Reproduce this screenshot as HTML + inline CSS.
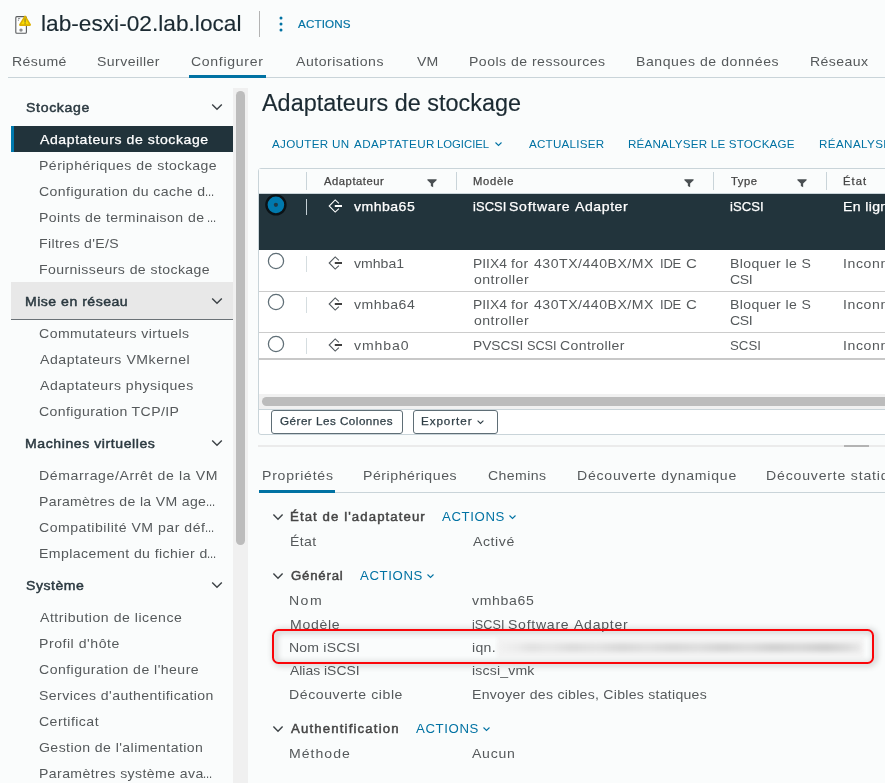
<!DOCTYPE html>
<html lang="fr"><head><meta charset="utf-8"><title>vSphere Client - lab-esxi-02.lab.local</title><style>
*{margin:0;padding:0;box-sizing:border-box}
html,body{width:885px;height:783px;overflow:hidden;background:#fafcfc;font-family:"Liberation Sans",sans-serif}
#r{position:relative;width:885px;height:783px;overflow:hidden}
.b{position:absolute}
.t{position:absolute;white-space:nowrap;line-height:1;transform-origin:0 0;display:block}
.m{-webkit-text-stroke:0.25px currentColor}
.h{-webkit-text-stroke:0.45px currentColor}
.l{-webkit-text-stroke:0.15px currentColor}
</style></head><body><div id="r">
<!-- host icon -->
<svg class="b" style="left:14px;top:14px" width="20" height="22" viewBox="0 0 20 22">
  <rect x="1.8" y="2.65" width="10.6" height="16.65" rx="1" fill="#fdfefe" stroke="#585b5d" stroke-width="1.1"/>
  <circle cx="7" cy="16.1" r="1.7" fill="#8a8c8d"/>
  <path d="M4 4.6 H6.2 M4.4 5.6 V6.8" stroke="#7d8082" stroke-width="0.9" fill="none"/>
  <path d="M11.05 2.7 L15.9 10.9 L6.2 10.9 Z" fill="#f9dc00" stroke="#dcb000" stroke-width="2.2" stroke-linejoin="round"/><path d="M11.05 3.6 L14.9 10.3 L7.2 10.3 Z" fill="#f9dc00"/>
  <rect x="10.35" y="4.4" width="1.45" height="4.2" fill="#a38d22"/>
  <rect x="10.35" y="9.2" width="1.45" height="1.1" fill="#a38d22"/>
</svg>
<div class="b" style="left:259px;top:11px;width:1px;height:26px;background:#b3b3b3"></div>
<svg class="b" style="left:278px;top:15px" width="6" height="18" viewBox="0 0 6 18"><circle cx="3" cy="3" r="1.5" fill="#0072a3"/><circle cx="3" cy="9" r="1.5" fill="#0072a3"/><circle cx="3" cy="15" r="1.5" fill="#0072a3"/></svg>
<!-- top tabs line -->
<div class="b" style="left:8px;top:77px;width:877px;height:1px;background:#c9d4d9"></div>
<div class="b" style="left:189px;top:75px;width:77px;height:3px;background:#0072a3"></div>
<!-- left nav -->
<div class="b" style="left:11px;top:126px;width:222px;height:25.5px;background:#21333b"></div>
<div class="b" style="left:11px;top:126px;width:3px;height:25.5px;background:#0079ad"></div>
<div class="b" style="left:11px;top:282px;width:222px;height:38px;background:#e8e8e8;border-bottom:1px solid #6b7277"></div>
<svg class="b" style="left:211px;top:103px" width="12" height="8" viewBox="0 0 12 8"><path d="M1.2 1.5 L6 6.2 L10.8 1.5" fill="none" stroke="#3d4347" stroke-width="1.45"/></svg>
<svg class="b" style="left:211px;top:297px" width="12" height="8" viewBox="0 0 12 8"><path d="M1.2 1.5 L6 6.2 L10.8 1.5" fill="none" stroke="#3d4347" stroke-width="1.45"/></svg>
<svg class="b" style="left:211px;top:439px" width="12" height="8" viewBox="0 0 12 8"><path d="M1.2 1.5 L6 6.2 L10.8 1.5" fill="none" stroke="#3d4347" stroke-width="1.45"/></svg>
<svg class="b" style="left:211px;top:581px" width="12" height="8" viewBox="0 0 12 8"><path d="M1.2 1.5 L6 6.2 L10.8 1.5" fill="none" stroke="#3d4347" stroke-width="1.45"/></svg>
<!-- nav scrollbar -->
<div class="b" style="left:233px;top:88px;width:15px;height:695px;background:#f0f0f0"></div>
<div class="b" style="left:236.2px;top:91px;width:8.9px;height:454px;background:#bcbcbc;border-radius:4.5px"></div>
<!-- datagrid -->
<div class="b" style="left:258px;top:168px;width:640px;height:267px;background:#ffffff;border:1px solid #c9d4d9;border-radius:3px"></div>
<div class="b" style="left:259px;top:169px;width:626px;height:24px;background:#fafcfc"></div>
<div class="b" style="left:259px;top:193px;width:626px;height:1px;background:#c9d4d9"></div>
<div class="b" style="left:306px;top:172px;width:1px;height:18px;background:#c9d4d9"></div>
<div class="b" style="left:456px;top:172px;width:1px;height:18px;background:#c9d4d9"></div>
<div class="b" style="left:713px;top:172px;width:1px;height:18px;background:#c9d4d9"></div>
<div class="b" style="left:826px;top:172px;width:1px;height:18px;background:#c9d4d9"></div>
<svg class="b" style="left:427px;top:178px" width="10" height="10" viewBox="0 0 10 10"><path d="M0.4 1.2 H9.6 V2.2 L6.15 5.6 V9.2 L3.85 7.9 V5.6 L0.4 2.2 Z" fill="#4a4f52"/></svg>
<svg class="b" style="left:684px;top:178px" width="10" height="10" viewBox="0 0 10 10"><path d="M0.4 1.2 H9.6 V2.2 L6.15 5.6 V9.2 L3.85 7.9 V5.6 L0.4 2.2 Z" fill="#4a4f52"/></svg>
<svg class="b" style="left:796.5px;top:178px" width="10" height="10" viewBox="0 0 10 10"><path d="M0.4 1.2 H9.6 V2.2 L6.15 5.6 V9.2 L3.85 7.9 V5.6 L0.4 2.2 Z" fill="#4a4f52"/></svg>
<!-- selected row -->
<div class="b" style="left:259px;top:194px;width:626px;height:56px;background:#22343c"></div>
<div class="b" style="left:306px;top:199px;width:1px;height:16px;background:#c4cfd5"></div>
<svg class="b" style="left:264px;top:193px" width="24" height="24" viewBox="0 0 24 24"><circle cx="11.9" cy="11.85" r="9.5" fill="#0079ad" stroke="#0b1216" stroke-width="2.4"/><circle cx="11.9" cy="11.85" r="2.1" fill="#1d3a47"/></svg>
<!-- other rows -->
<div class="b" style="left:259px;top:291px;width:626px;height:1px;background:#cccccc"></div>
<div class="b" style="left:259px;top:332px;width:626px;height:1px;background:#cccccc"></div>
<div class="b" style="left:259px;top:358.2px;width:626px;height:1.6px;background:#c8c8c8"></div>
<div class="b" style="left:306px;top:256px;width:1px;height:16px;background:#d5dde0"></div>
<div class="b" style="left:306px;top:297px;width:1px;height:16px;background:#d5dde0"></div>
<div class="b" style="left:306px;top:338px;width:1px;height:16px;background:#d5dde0"></div>
<svg class="b" style="left:266px;top:251.4px" width="20" height="20" viewBox="0 0 20 20"><circle cx="10" cy="10" r="7.6" fill="#fff" stroke="#5f6e76" stroke-width="1.25"/></svg>
<svg class="b" style="left:266px;top:292.4px" width="20" height="20" viewBox="0 0 20 20"><circle cx="10" cy="10" r="7.6" fill="#fff" stroke="#5f6e76" stroke-width="1.25"/></svg>
<svg class="b" style="left:266px;top:333.5px" width="20" height="20" viewBox="0 0 20 20"><circle cx="10" cy="10" r="7.6" fill="#fff" stroke="#5f6e76" stroke-width="1.25"/></svg>
<!-- adapter icons -->
<svg class="b" style="left:328px;top:198.9px" width="16" height="14" viewBox="0 0 16 14"><path d="M10.9 4.3 L7.2 0.9 L1.2 7 L7.2 13.1 L10.9 9.7" fill="none" stroke="#ffffff" stroke-width="1.1"/><path d="M6.8 7 H14" stroke="#ffffff" stroke-width="2.0"/></svg>
<svg class="b" style="left:328px;top:255.8px" width="16" height="14" viewBox="0 0 16 14"><path d="M10.9 4.3 L7.2 0.9 L1.2 7 L7.2 13.1 L10.9 9.7" fill="none" stroke="#50575c" stroke-width="1.1"/><path d="M6.8 7 H14" stroke="#414141" stroke-width="2.0"/></svg>
<svg class="b" style="left:328px;top:296.8px" width="16" height="14" viewBox="0 0 16 14"><path d="M10.9 4.3 L7.2 0.9 L1.2 7 L7.2 13.1 L10.9 9.7" fill="none" stroke="#50575c" stroke-width="1.1"/><path d="M6.8 7 H14" stroke="#414141" stroke-width="2.0"/></svg>
<svg class="b" style="left:328px;top:337.8px" width="16" height="14" viewBox="0 0 16 14"><path d="M10.9 4.3 L7.2 0.9 L1.2 7 L7.2 13.1 L10.9 9.7" fill="none" stroke="#50575c" stroke-width="1.1"/><path d="M6.8 7 H14" stroke="#414141" stroke-width="2.0"/></svg>
<!-- h scrollbar -->
<div class="b" style="left:259px;top:394px;width:626px;height:15px;background:#f1f1f1"></div>
<div class="b" style="left:262px;top:397px;width:640px;height:9px;background:#bcbcbc;border-radius:4.5px"></div>
<div class="b" style="left:259px;top:409px;width:626px;height:1px;background:#c9d4d9"></div>
<!-- footer buttons -->
<div class="b" style="left:271px;top:410px;width:132px;height:24px;border:1px solid #5f6e76;border-radius:3px;background:#fff"></div>
<div class="b" style="left:413px;top:410px;width:85px;height:24px;border:1px solid #5f6e76;border-radius:3px;background:#fff"></div>
<svg class="b" style="left:475.5px;top:418.5px" width="9" height="6" viewBox="0 0 9 6"><path d="M1.6 1.6 L4.5 4.4 L7.4 1.6" fill="none" stroke="#2f3e46" stroke-width="1.1"/></svg>
<!-- add-adapter chevron -->
<svg class="b" style="left:494px;top:141px" width="9" height="6" viewBox="0 0 9 6"><path d="M1.5 1.5 L4.5 4.4 L7.5 1.5" fill="none" stroke="#0072a3" stroke-width="1.1"/></svg>
<!-- splitter -->
<div class="b" style="left:258px;top:445px;width:627px;height:1.5px;background:#ebebeb"></div>
<div class="b" style="left:844px;top:445px;width:25px;height:2px;background:#b3b3b3"></div>
<!-- detail tabs -->
<div class="b" style="left:259px;top:492px;width:626px;height:1px;background:#c9d4d9"></div>
<div class="b" style="left:259px;top:490px;width:76px;height:3px;background:#0072a3"></div>
<!-- section chevrons -->
<svg class="b" style="left:272px;top:512.5px" width="12" height="8" viewBox="0 0 12 8"><path d="M1.4 1.6 L6 6.2 L10.6 1.6" fill="none" stroke="#3d4347" stroke-width="1.45"/></svg>
<svg class="b" style="left:272px;top:571.5px" width="12" height="8" viewBox="0 0 12 8"><path d="M1.4 1.6 L6 6.2 L10.6 1.6" fill="none" stroke="#3d4347" stroke-width="1.45"/></svg>
<svg class="b" style="left:272px;top:724.5px" width="12" height="8" viewBox="0 0 12 8"><path d="M1.4 1.6 L6 6.2 L10.6 1.6" fill="none" stroke="#3d4347" stroke-width="1.45"/></svg>
<svg class="b" style="left:507.5px;top:514px" width="9" height="6" viewBox="0 0 9 6"><path d="M1.5 1.5 L4.5 4.4 L7.5 1.5" fill="none" stroke="#0072a3" stroke-width="1.1"/></svg>
<svg class="b" style="left:425.5px;top:573px" width="9" height="6" viewBox="0 0 9 6"><path d="M1.5 1.5 L4.5 4.4 L7.5 1.5" fill="none" stroke="#0072a3" stroke-width="1.1"/></svg>
<svg class="b" style="left:481.5px;top:726px" width="9" height="6" viewBox="0 0 9 6"><path d="M1.5 1.5 L4.5 4.4 L7.5 1.5" fill="none" stroke="#0072a3" stroke-width="1.1"/></svg>

<span class="t l" style="left:40.80px;top:13.00px;font-size:22.6px;color:#1b2a32;letter-spacing:0.01px;transform:scaleX(1.0030);">lab-esxi-02.lab.local</span>
<span class="t l" style="left:298.00px;top:19.00px;font-size:10.6px;color:#0072a3;letter-spacing:0.121px;transform:scaleX(1.1000);">ACTIONS</span>
<span class="t" style="left:12.00px;top:56.00px;font-size:12.8px;color:#55595b;letter-spacing:0.345px;transform:scaleX(1.1000);">Résumé</span>
<span class="t" style="left:97.00px;top:56.00px;font-size:12.8px;color:#55595b;letter-spacing:0.384px;transform:scaleX(1.1000);">Surveiller</span>
<span class="t" style="left:191.00px;top:56.00px;font-size:12.8px;color:#55595b;letter-spacing:0.616px;transform:scaleX(1.1000);">Configurer</span>
<span class="t" style="left:295.50px;top:56.00px;font-size:12.8px;color:#55595b;letter-spacing:0.462px;transform:scaleX(1.1000);">Autorisations</span>
<span class="t" style="left:416.60px;top:56.00px;font-size:12.8px;color:#55595b;transform:scaleX(1.1000);">VM</span>
<span class="t" style="left:469.00px;top:56.00px;font-size:12.8px;color:#55595b;letter-spacing:0.429px;transform:scaleX(1.1000);">Pools de ressources</span>
<span class="t" style="left:636.00px;top:56.00px;font-size:12.8px;color:#55595b;letter-spacing:0.508px;transform:scaleX(1.1000);">Banques de données</span>
<span class="t" style="left:809.50px;top:56.00px;font-size:12.8px;color:#55595b;letter-spacing:0.394px;transform:scaleX(1.1000);">Réseaux</span>
<span class="t h" style="left:26.00px;top:102.00px;font-size:12.8px;color:#2b3940;letter-spacing:0.61px;transform:scaleX(1.1000);">Stockage</span>
<span class="t m" style="left:40.00px;top:134.00px;font-size:12.8px;color:#ffffff;letter-spacing:0.512px;transform:scaleX(1.1000);">Adaptateurs de stockage</span>
<span class="t" style="left:39.00px;top:160.00px;font-size:12.8px;color:#55595b;letter-spacing:0.417px;transform:scaleX(1.1000);">Périphériques de stockage</span>
<span class="t" style="left:39.00px;top:186.00px;font-size:12.8px;color:#55595b;letter-spacing:0.379px;transform:scaleX(1.1000);">Configuration du cache d</span>
<span class="t" style="left:205.10px;top:186.00px;font-size:12.8px;color:#55595b;letter-spacing:-0.114px;transform:scaleX(0.8778);">...</span>
<span class="t" style="left:39.00px;top:212.00px;font-size:12.8px;color:#55595b;letter-spacing:0.399px;transform:scaleX(1.1000);">Points de terminaison de</span>
<span class="t" style="left:207.10px;top:212.00px;font-size:12.8px;color:#55595b;letter-spacing:-0.114px;transform:scaleX(0.8778);">...</span>
<span class="t" style="left:39.00px;top:238.00px;font-size:12.8px;color:#55595b;letter-spacing:0.326px;transform:scaleX(1.1000);">Filtres d&#x27;E/S</span>
<span class="t" style="left:39.00px;top:264.00px;font-size:12.8px;color:#55595b;letter-spacing:0.375px;transform:scaleX(1.1000);">Fournisseurs de stockage</span>
<span class="t h" style="left:25.00px;top:296.00px;font-size:12.8px;color:#2b3940;letter-spacing:0.448px;transform:scaleX(1.1000);">Mise en réseau</span>
<span class="t" style="left:39.00px;top:328.00px;font-size:12.8px;color:#55595b;letter-spacing:0.423px;transform:scaleX(1.1000);">Commutateurs virtuels</span>
<span class="t" style="left:40.00px;top:354.00px;font-size:12.8px;color:#55595b;letter-spacing:0.498px;transform:scaleX(1.1000);">Adaptateurs VMkernel</span>
<span class="t" style="left:40.00px;top:380.00px;font-size:12.8px;color:#55595b;letter-spacing:0.455px;transform:scaleX(1.1000);">Adaptateurs physiques</span>
<span class="t" style="left:39.00px;top:406.00px;font-size:12.8px;color:#55595b;letter-spacing:0.34px;transform:scaleX(1.1000);">Configuration TCP/IP</span>
<span class="t h" style="left:25.00px;top:438.00px;font-size:12.8px;color:#2b3940;letter-spacing:0.515px;transform:scaleX(1.1000);">Machines virtuelles</span>
<span class="t" style="left:39.00px;top:470.00px;font-size:12.8px;color:#55595b;letter-spacing:0.561px;transform:scaleX(1.1000);">Démarrage/Arrêt de la VM</span>
<span class="t" style="left:39.00px;top:496.00px;font-size:12.8px;color:#55595b;letter-spacing:0.302px;transform:scaleX(1.1000);">Paramètres de la VM age</span>
<span class="t" style="left:206.10px;top:496.00px;font-size:12.8px;color:#55595b;letter-spacing:-0.114px;transform:scaleX(0.8778);">...</span>
<span class="t" style="left:39.00px;top:522.00px;font-size:12.8px;color:#55595b;letter-spacing:0.466px;transform:scaleX(1.1000);">Compatibilité VM par déf</span>
<span class="t" style="left:205.10px;top:522.00px;font-size:12.8px;color:#55595b;letter-spacing:-0.114px;transform:scaleX(0.8778);">...</span>
<span class="t" style="left:39.00px;top:548.00px;font-size:12.8px;color:#55595b;letter-spacing:0.372px;transform:scaleX(1.1000);">Emplacement du fichier d</span>
<span class="t" style="left:207.10px;top:548.00px;font-size:12.8px;color:#55595b;letter-spacing:-0.114px;transform:scaleX(0.8778);">...</span>
<span class="t h" style="left:26.00px;top:580.00px;font-size:12.8px;color:#2b3940;letter-spacing:0.455px;transform:scaleX(1.1000);">Système</span>
<span class="t" style="left:40.00px;top:612.00px;font-size:12.8px;color:#55595b;letter-spacing:0.481px;transform:scaleX(1.1000);">Attribution de licence</span>
<span class="t" style="left:39.00px;top:638.00px;font-size:12.8px;color:#55595b;letter-spacing:0.485px;transform:scaleX(1.1000);">Profil d&#x27;hôte</span>
<span class="t" style="left:39.00px;top:664.00px;font-size:12.8px;color:#55595b;letter-spacing:0.419px;transform:scaleX(1.1000);">Configuration de l&#x27;heure</span>
<span class="t" style="left:39.00px;top:690.00px;font-size:12.8px;color:#55595b;letter-spacing:0.395px;transform:scaleX(1.1000);">Services d&#x27;authentification</span>
<span class="t" style="left:39.00px;top:716.00px;font-size:12.8px;color:#55595b;letter-spacing:0.404px;transform:scaleX(1.1000);">Certificat</span>
<span class="t" style="left:39.00px;top:742.00px;font-size:12.8px;color:#55595b;letter-spacing:0.386px;transform:scaleX(1.1000);">Gestion de l&#x27;alimentation</span>
<span class="t" style="left:39.00px;top:768.00px;font-size:12.8px;color:#55595b;letter-spacing:0.372px;transform:scaleX(1.1000);">Paramètres système ava</span>
<span class="t" style="left:203.10px;top:768.00px;font-size:12.8px;color:#55595b;letter-spacing:-0.114px;transform:scaleX(0.8778);">...</span>
<span class="t l" style="left:262.00px;top:92.00px;font-size:23px;color:#1b2a32;transform:scaleX(1.0177);">Adaptateurs de stockage</span>
<span class="t" style="left:272.10px;top:139.00px;font-size:10.6px;color:#0072a3;letter-spacing:0.283px;transform:scaleX(1.1000);">AJOUTER UN</span>
<span class="t" style="left:354.00px;top:139.00px;font-size:10.6px;color:#0072a3;letter-spacing:0.394px;transform:scaleX(1.1000);">ADAPTATEUR</span>
<span class="t" style="left:437.20px;top:139.00px;font-size:10.6px;color:#0072a3;letter-spacing:-0.027px;transform:scaleX(1.0708);">LOGICIEL</span>
<span class="t" style="left:529.00px;top:139.00px;font-size:10.6px;color:#0072a3;letter-spacing:0.192px;transform:scaleX(1.1000);">ACTUALISER</span>
<span class="t" style="left:628.00px;top:139.00px;font-size:10.6px;color:#0072a3;letter-spacing:0.165px;transform:scaleX(1.1000);">RÉANALYSER LE STOCKAGE</span>
<span class="t" style="left:819.00px;top:139.00px;font-size:10.6px;color:#0072a3;letter-spacing:0.347px;transform:scaleX(1.1000);">RÉANALYSER L</span>
<span class="t m" style="left:324.00px;top:177.00px;font-size:10.2px;color:#454545;letter-spacing:0.505px;transform:scaleX(1.1000);">Adaptateur</span>
<span class="t m" style="left:473.00px;top:177.00px;font-size:10.2px;color:#454545;letter-spacing:0.673px;transform:scaleX(1.1000);">Modèle</span>
<span class="t m" style="left:731.00px;top:177.00px;font-size:10.2px;color:#454545;letter-spacing:0.545px;transform:scaleX(1.1000);">Type</span>
<span class="t m" style="left:843.00px;top:177.00px;font-size:10.2px;color:#454545;letter-spacing:0.97px;transform:scaleX(1.1000);">État</span>
<span class="t m" style="left:354.00px;top:201.00px;font-size:12.8px;color:#ffffff;letter-spacing:0.424px;transform:scaleX(1.1000);">vmhba65</span>
<span class="t m" style="left:472.70px;top:201.00px;font-size:12.8px;color:#ffffff;letter-spacing:0.099px;transform:scaleX(1.0065);">iSCSI</span>
<span class="t m" style="left:509.40px;top:201.00px;font-size:12.8px;color:#ffffff;letter-spacing:0.662px;transform:scaleX(1.1000);">Software</span>
<span class="t m" style="left:574.80px;top:201.00px;font-size:12.8px;color:#ffffff;letter-spacing:0.515px;transform:scaleX(1.1000);">Adapter</span>
<span class="t m" style="left:729.90px;top:201.00px;font-size:12.8px;color:#ffffff;letter-spacing:0.049px;transform:scaleX(1.0194);">iSCSI</span>
<span class="t m" style="left:843.00px;top:201.00px;font-size:12.8px;color:#ffffff;letter-spacing:0.325px;transform:scaleX(1.1000);">En ligne</span>
<span class="t" style="left:354.00px;top:258.00px;font-size:12.8px;color:#55595b;transform:scaleX(1.1000);">vmhba1</span>
<span class="t" style="left:472.60px;top:258.00px;font-size:12.8px;color:#55595b;transform:scaleX(1.0833);">PIIX4</span>
<span class="t" style="left:510.70px;top:258.00px;font-size:12.8px;color:#55595b;letter-spacing:0.364px;transform:scaleX(1.1000);">for</span>
<span class="t" style="left:533.80px;top:258.00px;font-size:12.8px;color:#55595b;letter-spacing:0.469px;transform:scaleX(1.1000);">430TX/440BX/MX</span>
<span class="t" style="left:660.30px;top:258.00px;font-size:12.8px;color:#55595b;letter-spacing:-0.197px;transform:scaleX(1.0150);">IDE</span>
<span class="t" style="left:686.20px;top:258.00px;font-size:12.8px;color:#55595b;transform:scaleX(1.1750);">C</span>
<span class="t" style="left:473.60px;top:274.00px;font-size:12.8px;color:#55595b;letter-spacing:0.432px;transform:scaleX(1.1000);">ontroller</span>
<span class="t" style="left:730.00px;top:258.00px;font-size:12.8px;color:#55595b;letter-spacing:0.347px;transform:scaleX(1.1000);">Bloquer le S</span>
<span class="t" style="left:730.00px;top:274.00px;font-size:12.8px;color:#55595b;letter-spacing:-0.409px;transform:scaleX(1.1000);">CSI</span>
<span class="t" style="left:843.00px;top:258.00px;font-size:12.8px;color:#55595b;letter-spacing:0.545px;transform:scaleX(1.1000);">Inconnu</span>
<span class="t" style="left:354.00px;top:299.00px;font-size:12.8px;color:#55595b;letter-spacing:0.424px;transform:scaleX(1.1000);">vmhba64</span>
<span class="t" style="left:472.60px;top:299.00px;font-size:12.8px;color:#55595b;transform:scaleX(1.0833);">PIIX4</span>
<span class="t" style="left:510.70px;top:299.00px;font-size:12.8px;color:#55595b;letter-spacing:0.364px;transform:scaleX(1.1000);">for</span>
<span class="t" style="left:533.80px;top:299.00px;font-size:12.8px;color:#55595b;letter-spacing:0.469px;transform:scaleX(1.1000);">430TX/440BX/MX</span>
<span class="t" style="left:660.30px;top:299.00px;font-size:12.8px;color:#55595b;letter-spacing:-0.197px;transform:scaleX(1.0150);">IDE</span>
<span class="t" style="left:686.20px;top:299.00px;font-size:12.8px;color:#55595b;transform:scaleX(1.1750);">C</span>
<span class="t" style="left:473.60px;top:315.00px;font-size:12.8px;color:#55595b;letter-spacing:0.432px;transform:scaleX(1.1000);">ontroller</span>
<span class="t" style="left:730.00px;top:299.00px;font-size:12.8px;color:#55595b;letter-spacing:0.347px;transform:scaleX(1.1000);">Bloquer le S</span>
<span class="t" style="left:730.00px;top:315.00px;font-size:12.8px;color:#55595b;letter-spacing:-0.409px;transform:scaleX(1.1000);">CSI</span>
<span class="t" style="left:843.00px;top:299.00px;font-size:12.8px;color:#55595b;letter-spacing:0.545px;transform:scaleX(1.1000);">Inconnu</span>
<span class="t" style="left:354.00px;top:340.00px;font-size:12.8px;color:#55595b;letter-spacing:0.818px;transform:scaleX(1.1000);">vmhba0</span>
<span class="t" style="left:472.60px;top:340.00px;font-size:12.8px;color:#55595b;letter-spacing:-0.037px;transform:scaleX(1.0756);">PVSCSI</span>
<span class="t" style="left:526.60px;top:340.00px;font-size:12.8px;color:#55595b;letter-spacing:-0.067px;transform:scaleX(0.9964);">SCSI</span>
<span class="t" style="left:559.80px;top:340.00px;font-size:12.8px;color:#55595b;letter-spacing:0.343px;transform:scaleX(1.1000);">Controller</span>
<span class="t" style="left:730.00px;top:340.00px;font-size:12.8px;color:#55595b;transform:scaleX(1.0357);">SCSI</span>
<span class="t" style="left:843.00px;top:340.00px;font-size:12.8px;color:#55595b;letter-spacing:0.545px;transform:scaleX(1.1000);">Inconnu</span>
<span class="t m" style="left:280.40px;top:416.00px;font-size:10.6px;color:#2f3e46;letter-spacing:0.444px;transform:scaleX(1.1000);">Gérer Les Colonnes</span>
<span class="t m" style="left:421.20px;top:416.00px;font-size:10.6px;color:#2f3e46;letter-spacing:0.844px;transform:scaleX(1.1000);">Exporter</span>
<span class="t" style="left:261.50px;top:470.00px;font-size:12.8px;color:#55595b;letter-spacing:0.687px;transform:scaleX(1.1000);">Propriétés</span>
<span class="t" style="left:363.00px;top:470.00px;font-size:12.8px;color:#55595b;letter-spacing:0.508px;transform:scaleX(1.1000);">Périphériques</span>
<span class="t" style="left:487.50px;top:470.00px;font-size:12.8px;color:#55595b;letter-spacing:0.394px;transform:scaleX(1.1000);">Chemins</span>
<span class="t" style="left:576.50px;top:470.00px;font-size:12.8px;color:#55595b;letter-spacing:0.694px;transform:scaleX(1.1000);">Découverte dynamique</span>
<span class="t" style="left:766.00px;top:470.00px;font-size:12.8px;color:#55595b;letter-spacing:0.742px;transform:scaleX(1.1000);">Découverte statique</span>
<span class="t h" style="left:289.50px;top:511.00px;font-size:12px;color:#454545;letter-spacing:0.99px;transform:scaleX(1.1000);">État de l&#x27;adaptateur</span>
<span class="t" style="left:442.00px;top:511.00px;font-size:12px;color:#0072a3;letter-spacing:0.561px;transform:scaleX(1.1000);">ACTIONS</span>
<span class="t" style="left:289.60px;top:536.00px;font-size:12.8px;color:#55595b;letter-spacing:0.303px;transform:scaleX(1.1000);">État</span>
<span class="t" style="left:472.80px;top:536.00px;font-size:12.8px;color:#55595b;letter-spacing:0.527px;transform:scaleX(1.1000);">Activé</span>
<span class="t h" style="left:290.50px;top:570.00px;font-size:12px;color:#454545;letter-spacing:0.727px;transform:scaleX(1.1000);">Général</span>
<span class="t" style="left:360.00px;top:570.00px;font-size:12px;color:#0072a3;letter-spacing:0.561px;transform:scaleX(1.1000);">ACTIONS</span>
<span class="t" style="left:289.30px;top:595.00px;font-size:12.8px;color:#55595b;letter-spacing:1.318px;transform:scaleX(1.1000);">Nom</span>
<span class="t" style="left:472.40px;top:595.00px;font-size:12.8px;color:#55595b;letter-spacing:0.576px;transform:scaleX(1.1000);">vmhba65</span>
<span class="t" style="left:289.50px;top:619.00px;font-size:12.8px;color:#55595b;letter-spacing:0.618px;transform:scaleX(1.1000);">Modèle</span>
<span class="t" style="left:472.20px;top:619.00px;font-size:12.8px;color:#55595b;letter-spacing:0.051px;transform:scaleX(0.9871);">iSCSI</span>
<span class="t" style="left:508.00px;top:619.00px;font-size:12.8px;color:#55595b;letter-spacing:0.662px;transform:scaleX(1.1000);">Software</span>
<span class="t" style="left:573.50px;top:619.00px;font-size:12.8px;color:#55595b;letter-spacing:0.667px;transform:scaleX(1.1000);">Adapter</span>
<span class="t" style="left:290.30px;top:665.00px;font-size:12.8px;color:#55595b;transform:scaleX(1.0873);">Alias iSCSI</span>
<span class="t" style="left:472.20px;top:665.00px;font-size:12.8px;color:#55595b;letter-spacing:0.159px;transform:scaleX(1.1000);">iscsi_vmk</span>
<span class="t" style="left:289.00px;top:689.00px;font-size:12.8px;color:#55595b;letter-spacing:0.521px;transform:scaleX(1.1000);">Découverte cible</span>
<span class="t" style="left:472.20px;top:689.00px;font-size:12.8px;color:#55595b;letter-spacing:0.244px;transform:scaleX(1.1000);">Envoyer des cibles, Cibles statiques</span>
<span class="t h" style="left:290.50px;top:723.00px;font-size:12px;color:#454545;letter-spacing:1.048px;transform:scaleX(1.1000);">Authentification</span>
<span class="t" style="left:416.00px;top:723.00px;font-size:12px;color:#0072a3;letter-spacing:0.561px;transform:scaleX(1.1000);">ACTIONS</span>
<span class="t" style="left:289.00px;top:748.00px;font-size:12.8px;color:#55595b;letter-spacing:0.924px;transform:scaleX(1.1000);">Méthode</span>
<span class="t" style="left:472.00px;top:748.00px;font-size:12.8px;color:#55595b;letter-spacing:0.659px;transform:scaleX(1.1000);">Aucun</span>
<!-- blurred value -->
<div class="b" style="left:490px;top:630px;width:384px;height:34px;overflow:hidden">
  <div style="position:absolute;left:7px;top:6.5px;width:367px;height:21px;filter:blur(1.6px);background:#f4f4f4"></div>
  <div style="position:absolute;left:9px;top:13px;width:362px;height:9px;filter:blur(2.2px);background:linear-gradient(90deg,#f1f1f1 0,#ebebeb 5%,#e1e1e1 9%,#e7e7e7 14%,#dddddd 20%,#e3e3e3 27%,#d9d9d9 34%,#e1e1e1 41%,#d8d8d8 48%,#dfdfdf 55%,#d5d5d5 62%,#dddddd 69%,#d2d2d2 76%,#d9d9d9 83%,#d0d0d0 90%,#dbdbdb 96%,#e9e9e9 100%)"></div>
</div>
<!-- red highlight box (annotation with soft shadow) -->
<div class="b" style="left:271.9px;top:629.2px;width:602.3px;height:35.1px;border:2.5px solid #fa0509;border-radius:6.5px;background:transparent;filter:drop-shadow(2px 1.5px 3px rgba(0,0,0,0.42))"></div>

<span class="t" style="left:289.10px;top:642.00px;font-size:12.8px;color:#55595b;letter-spacing:0.159px;transform:scaleX(1.1000);">Nom iSCSI</span>
<span class="t" style="left:472.20px;top:642.00px;font-size:12.8px;color:#55595b;letter-spacing:0.273px;transform:scaleX(1.1000);">iqn.</span>
</div></body></html>
